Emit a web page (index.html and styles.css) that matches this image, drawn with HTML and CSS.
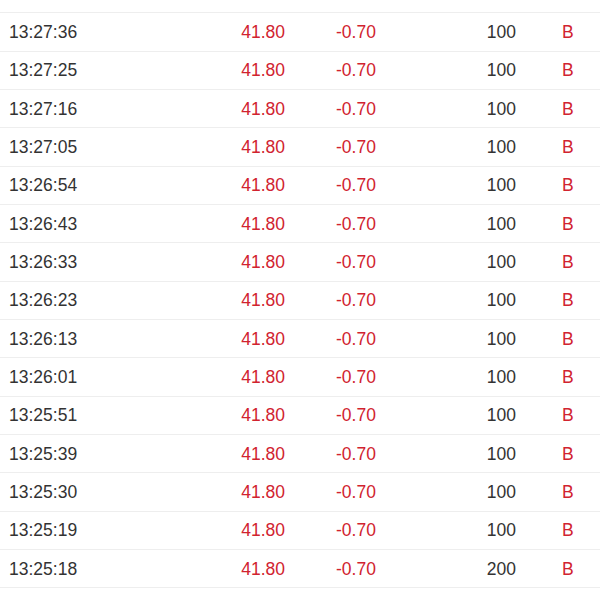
FILE: index.html
```html
<!DOCTYPE html>
<html lang="zh">
<head>
<meta charset="utf-8">
<title>成交明细</title>
<link rel="stylesheet" href="styles.css">
</head>
<body>
<div class="list">
  <div class="row"><span class="time">13:27:47</span><span class="price up">41.80</span><span class="chg up">-0.70</span><span class="vol">100</span><span class="side up">B</span></div>
  <div class="row"><span class="time">13:27:36</span><span class="price up">41.80</span><span class="chg up">-0.70</span><span class="vol">100</span><span class="side up">B</span></div>
  <div class="row"><span class="time">13:27:25</span><span class="price up">41.80</span><span class="chg up">-0.70</span><span class="vol">100</span><span class="side up">B</span></div>
  <div class="row"><span class="time">13:27:16</span><span class="price up">41.80</span><span class="chg up">-0.70</span><span class="vol">100</span><span class="side up">B</span></div>
  <div class="row"><span class="time">13:27:05</span><span class="price up">41.80</span><span class="chg up">-0.70</span><span class="vol">100</span><span class="side up">B</span></div>
  <div class="row"><span class="time">13:26:54</span><span class="price up">41.80</span><span class="chg up">-0.70</span><span class="vol">100</span><span class="side up">B</span></div>
  <div class="row"><span class="time">13:26:43</span><span class="price up">41.80</span><span class="chg up">-0.70</span><span class="vol">100</span><span class="side up">B</span></div>
  <div class="row"><span class="time">13:26:33</span><span class="price up">41.80</span><span class="chg up">-0.70</span><span class="vol">100</span><span class="side up">B</span></div>
  <div class="row"><span class="time">13:26:23</span><span class="price up">41.80</span><span class="chg up">-0.70</span><span class="vol">100</span><span class="side up">B</span></div>
  <div class="row"><span class="time">13:26:13</span><span class="price up">41.80</span><span class="chg up">-0.70</span><span class="vol">100</span><span class="side up">B</span></div>
  <div class="row"><span class="time">13:26:01</span><span class="price up">41.80</span><span class="chg up">-0.70</span><span class="vol">100</span><span class="side up">B</span></div>
  <div class="row"><span class="time">13:25:51</span><span class="price up">41.80</span><span class="chg up">-0.70</span><span class="vol">100</span><span class="side up">B</span></div>
  <div class="row"><span class="time">13:25:39</span><span class="price up">41.80</span><span class="chg up">-0.70</span><span class="vol">100</span><span class="side up">B</span></div>
  <div class="row"><span class="time">13:25:30</span><span class="price up">41.80</span><span class="chg up">-0.70</span><span class="vol">100</span><span class="side up">B</span></div>
  <div class="row"><span class="time">13:25:19</span><span class="price up">41.80</span><span class="chg up">-0.70</span><span class="vol">100</span><span class="side up">B</span></div>
  <div class="row"><span class="time">13:25:18</span><span class="price up">41.80</span><span class="chg up">-0.70</span><span class="vol">200</span><span class="side up">B</span></div>
</div>
</body>
</html>
```

FILE: styles.css
```css
html, body {
  margin: 0;
  padding: 0;
  background: #ffffff;
  overflow: hidden;
}

body {
  font-family: "Liberation Sans", Arial, sans-serif;
  font-size: 17.5px;
  color: #333333;
}

.list {
  margin-top: -25px;
}

.row {
  box-sizing: border-box;
  height: 38.333px;
  display: grid;
  grid-template-columns: 176px 100px 51px 80px 100px 1fr;
  align-items: center;
  padding-left: 9px;
  padding-top: 1px;
  border-bottom: 1px solid #eeeeee;
}

.time {
  grid-column: 1;
}

.price {
  grid-column: 2;
  text-align: right;
}

.chg {
  grid-column: 4;
}

.vol {
  grid-column: 5;
  text-align: right;
}

.side {
  grid-column: 6;
  padding-left: 46px;
}

.up {
  color: #d1232f;
}
```
